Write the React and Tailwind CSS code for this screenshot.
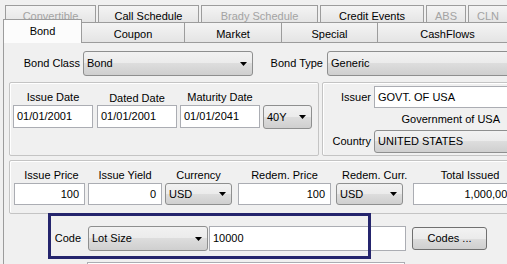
import React from 'react'

const font = "font-['Liberation_Sans',Arial,sans-serif]"

function Arrow() {
  return (
    <svg width="7" height="4" viewBox="0 0 7 4" className="shrink-0">
      <polygon points="0,0 7,0 3.5,4" fill="#000" />
    </svg>
  )
}

function Combo({ value, className = '' }) {
  return (
    <div
      className={`flex items-center justify-between border border-[#8e8f8f] rounded-[3px] bg-[linear-gradient(#f2f2f2,#ebebeb_50%,#dddddd_50%,#cfcfcf)] pl-[3px] pr-[5px] shrink-0 ${className}`}
    >
      <span className="whitespace-nowrap">{value}</span>
      <Arrow />
    </div>
  )
}

function Field({ value, right = false, className = '' }) {
  return (
    <div
      className={`flex items-center border border-[#abadb3] bg-white px-[3px] whitespace-nowrap shrink-0 ${right ? 'justify-end pr-[5px]' : ''} ${className}`}
    >
      {value}
    </div>
  )
}

function Group({ className = '', children }) {
  return (
    <div className={`border border-[#c4c4c4] rounded-[2px] shadow-[inset_1px_1px_0_#fff] shrink-0 ${className}`}>
      {children}
    </div>
  )
}

const topTabs = [
  { label: 'Convertible', w: 'w-[91px]', off: true },
  { label: 'Call Schedule', w: 'w-[101px]' },
  { label: 'Brady Schedule', w: 'w-[117px]', off: true },
  { label: 'Credit Events', w: 'w-[104px]' },
  { label: 'ABS', w: 'w-[40px]', off: true },
  { label: 'CLN', w: 'w-[40px]', off: true },
]

const lowTabs = [
  { label: 'Coupon', w: 'w-[103px]' },
  { label: 'Market', w: 'w-[97px]' },
  { label: 'Special', w: 'w-[96px]' },
  { label: 'CashFlows', w: 'w-[140px]' },
]

export default function App() {
  return (
    <div className={`relative w-[507px] h-[264px] overflow-hidden bg-[#f0f0f0] text-[11px] text-black ${font}`}>
      {/* back tab row */}
      <div className="flex gap-[2px] pl-[5px] pt-[5px] h-[22px]">
        {topTabs.map((t) => (
          <div
            key={t.label}
            className={`${t.w} h-[18px] shrink-0 flex justify-center pt-[2px] border border-b-0 border-[#9c9c9c] bg-[linear-gradient(#f4f4f4,#e4e4e4)] ${t.off ? 'text-[#a3a3a3]' : ''}`}
          >
            {t.label}
          </div>
        ))}
      </div>

      {/* front tab row */}
      <div className="flex pl-[3px] h-[20px]">
        <div className="relative z-10 -mt-[3px] w-[79px] h-[24px] shrink-0 flex justify-center pt-[3px] border border-b-0 border-[#9c9c9c] bg-[#fcfcfc]">
          Bond
        </div>
        {lowTabs.map((t) => (
          <div
            key={t.label}
            className={`${t.w} h-[20px] shrink-0 flex justify-center pt-[3px] border border-l-0 border-b-0 border-[#9c9c9c] bg-[linear-gradient(#f4f4f4,#e4e4e4)]`}
          >
            {t.label}
          </div>
        ))}
      </div>

      {/* tab page */}
      <div className="ml-[3px] h-[222px] border-l border-t border-[#9c9c9c] bg-[#f0f0f0]">
        <div className="flex items-center mt-[8px] h-[25px]">
          <div className="w-[76px] shrink-0 text-right">Bond Class</div>
          <Combo value="Bond" className="ml-[3px] w-[170px] h-[25px]" />
          <div className="w-[70px] shrink-0 text-right">Bond Type</div>
          <Combo value="Generic" className="ml-[4px] w-[200px] h-[25px]" />
        </div>

        <div className="flex mt-[6px] ml-[5px]">
          <Group className="w-[310px] h-[74px] pl-[3px] pt-[7px]">
            <div className="flex">
              <div className="flex flex-col items-center">
                <div className="h-[15px] leading-[15px]">Issue Date</div>
                <Field value="01/01/2001" className="w-[80px] h-[23px]" />
              </div>
              <div className="flex flex-col items-center ml-[4px]">
                <div className="h-[15px] leading-[15px] pt-[1px]">Dated Date</div>
                <Field value="01/01/2001" className="w-[80px] h-[23px]" />
              </div>
              <div className="flex flex-col items-center ml-[3px]">
                <div className="h-[15px] leading-[14px]">Maturity Date</div>
                <Field value="01/01/2041" className="w-[80px] h-[23px]" />
              </div>
              <div className="flex flex-col ml-[3px] pt-[15px]">
                <Combo value="40Y" className="w-[49px] h-[24px]" />
              </div>
            </div>
          </Group>

          <Group className="ml-[3px] w-[200px] h-[74px] pt-[3px]">
            <div className="flex items-center">
              <div className="w-[48px] shrink-0 text-right">Issuer</div>
              <Field value="GOVT. OF USA" className="ml-[3px] w-[150px] h-[22px]" />
            </div>
            <div className="h-[14px] leading-[14px] mt-[4px] w-[177px] text-right">Government of USA</div>
            <div className="flex items-center mt-[4px]">
              <div className="w-[48px] shrink-0 text-right">Country</div>
              <Combo value="UNITED STATES" className="ml-[3px] w-[150px] h-[23px]" />
            </div>
          </Group>
        </div>

        <Group className="mt-[4px] ml-[5px] w-[520px] h-[54px] pl-[4px] pt-[7px]">
          <div className="flex">
            <div className="flex flex-col shrink-0">
              <div className="h-[15px] leading-[15px] text-center pl-[4px]">Issue Price</div>
              <Field value="100" right className="w-[71px] h-[22px]" />
            </div>
            <div className="flex flex-col shrink-0 ml-[3px]">
              <div className="h-[15px] leading-[15px] text-center">Issue Yield</div>
              <Field value="0" right className="w-[74px] h-[22px]" />
            </div>
            <div className="flex flex-col shrink-0 ml-[3px]">
              <div className="h-[15px] leading-[15px] text-center">Currency</div>
              <Combo value="USD" className="w-[67px] h-[22px]" />
            </div>
            <div className="flex flex-col shrink-0 ml-[6px]">
              <div className="h-[15px] leading-[15px] text-center">Redem. Price</div>
              <Field value="100" right className="w-[93px] h-[22px]" />
            </div>
            <div className="flex flex-col shrink-0 ml-[5px]">
              <div className="h-[15px] leading-[15px] text-center pl-[6px]">Redem. Curr.</div>
              <Combo value="USD" className="w-[67px] h-[22px]" />
            </div>
            <div className="flex flex-col shrink-0 ml-[6px]">
              <div className="h-[15px] leading-[15px] text-right pr-[20px] whitespace-nowrap">Total Issued</div>
              <Field value="1,000,000" right className="w-[106px] h-[22px]" />
            </div>
          </div>
        </Group>

        <div className="flex items-center mt-[12px] h-[25px]">
          <div className="w-[77px] shrink-0 text-right">Code</div>
          <Combo value="Lot Size" className="ml-[7px] w-[120px] h-[25px]" />
          <Field value="10000" className="ml-[1px] w-[197px] h-[25px]" />
          <div className="ml-[6px] w-[75px] h-[23px] shrink-0 flex items-center justify-center border border-[#707070] rounded-[3px] bg-[linear-gradient(#f2f2f2,#ebebeb_50%,#dddddd_50%,#cfcfcf)]">
            Codes ...
          </div>
        </div>

        <div className="mt-[11px] ml-[83px] w-[318px] h-[20px] border border-[#abadb3] bg-white" />
      </div>

      {/* annotation box */}
      <div className="absolute left-[48px] top-[213px] w-[323px] h-[46px] border-[3px] border-[#25256d]" />
    </div>
  )
}
